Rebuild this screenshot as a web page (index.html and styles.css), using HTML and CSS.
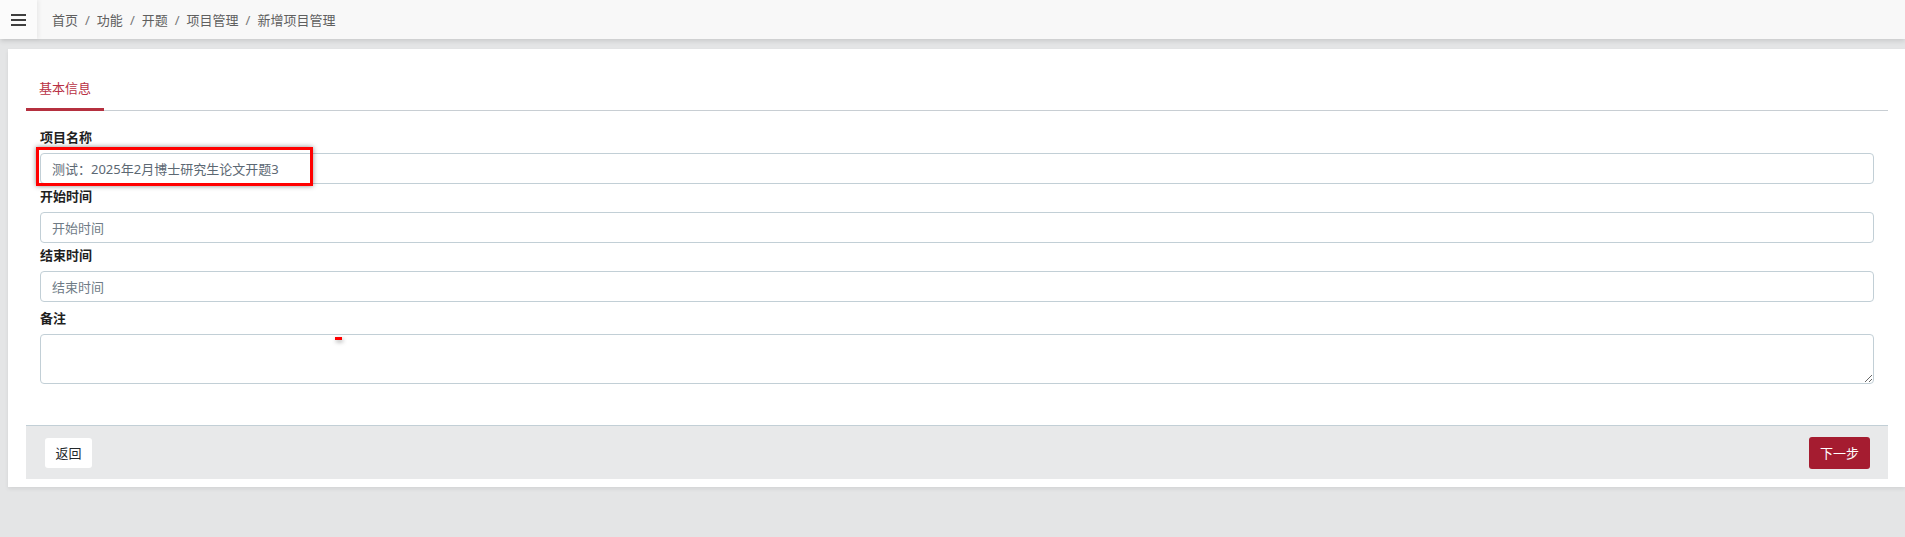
FILE: index.html
```html
<!DOCTYPE html>
<html lang="zh-CN">
<head>
<meta charset="utf-8">
<title>新增项目管理</title>
<link rel="stylesheet" href="styles.css">
</head>
<body>
<header class="topbar">
  <button class="menu-toggle" aria-label="menu">
    <span class="bar"></span><span class="bar"></span><span class="bar"></span>
  </button>
  <ol class="breadcrumb">
    <li>首页</li>
    <li class="sep">/</li>
    <li>功能</li>
    <li class="sep">/</li>
    <li>开题</li>
    <li class="sep">/</li>
    <li>项目管理</li>
    <li class="sep">/</li>
    <li>新增项目管理</li>
  </ol>
</header>
<main class="main">
  <section class="card">
    <nav class="tabs">
      <a class="tab active">基本信息</a>
    </nav>
    <form class="form-body">
      <div class="group">
        <label class="label">项目名称</label>
        <input class="input" type="text" value="测试：2025年2月博士研究生论文开题3">
      </div>
      <div class="group">
        <label class="label">开始时间</label>
        <input class="input" type="text" placeholder="开始时间">
      </div>
      <div class="group">
        <label class="label">结束时间</label>
        <input class="input" type="text" placeholder="结束时间">
      </div>
      <div class="group group-note">
        <label class="label">备注</label>
        <textarea class="textarea"></textarea>
      </div>
    </form>
    <div class="footer">
      <button class="btn btn-light" type="button">返回</button>
      <button class="btn btn-primary" type="button">下一步</button>
    </div>
  </section>
</main>
<div class="highlight"></div>
<div class="mark"></div>
</body>
</html>
```

FILE: styles.css
```css
* { box-sizing: border-box; }
html, body { margin: 0; padding: 0; }
body {
  background: #e4e5e6;
  font-family: "Noto Sans", "Noto Sans CJK SC", sans-serif;
  font-size: 13px;
  color: #23282c;
  height: 537px;
  overflow: hidden;
  position: relative;
}
.topbar {
  height: 39px;
  background: #f8f8f8;
  display: flex;
  align-items: center;
  box-shadow: 0 2px 5px rgba(0,0,0,0.12);
  position: relative;
  z-index: 2;
}
.menu-toggle {
  width: 37px;
  height: 39px;
  border: 0;
  padding: 0;
  background: #fbfbfb;
  box-shadow: 2px 0 4px rgba(0,0,0,0.06);
  display: flex;
  flex-direction: column;
  justify-content: center;
  align-items: center;
  gap: 3px;
}
.menu-toggle .bar {
  display: block;
  width: 15px;
  height: 2px;
  background: #3f3f3f;
}
.breadcrumb {
  list-style: none;
  margin: 0 0 0 15px;
  padding: 0;
  display: flex;
  align-items: center;
  color: #5f5f5f;
  font-size: 13px;
  line-height: 18px;
}
.breadcrumb .sep { margin: 0 7px; color: #777; }
.main {
  padding: 10px 0 0 8px;
}
.card {
  background: #fff;
  padding: 19px 17px 8px 18px;
  box-shadow: 0 2px 4px rgba(0,0,0,0.08);
}
.tabs {
  display: flex;
  border-bottom: 1px solid #c8ced3;
  height: 43px;
}
.tab {
  display: block;
  padding: 10px 13px;
  line-height: 20px;
  height: 43px;
  color: #b83144;
  border-bottom: 3px solid #b5303f;
  margin-bottom: -1px;
}
.form-body {
  padding: 17px 14px 0;
  margin: 0;
}
.group { display: flex; flex-direction: column; }
.label {
  display: block;
  font-weight: bold;
  line-height: 18px;
  margin: 3px 0 7px;
  color: #1f1f1f;
}
.group:first-child .label { margin-top: 0; }
.group-note .label { margin-top: 7px; }
.input {
  display: block;
  width: 100%;
  height: 31px;
  border: 1px solid #c2cfd6;
  border-radius: 4px;
  padding: 0 11px;
  font-family: inherit;
  font-size: 13px;
  color: #5c6873;
  background: #fff;
  outline: none;
}
.input::placeholder { color: #6f7b86; opacity: 1; }
.textarea {
  display: block;
  width: 100%;
  height: 50px;
  border: 1px solid #c2cfd6;
  border-radius: 4px;
  padding: 6px 11px;
  font-family: inherit;
  font-size: 13px;
  resize: vertical;
  outline: none;
}
.footer {
  margin-top: 41px;
  border-top: 1px solid #c2cfd6;
  background: #e8e9ea;
  height: 54px;
  padding: 0 18px 0 19px;
  display: flex;
  justify-content: space-between;
  align-items: center;
}
.btn {
  border: 0;
  border-radius: 3px;
  font-family: inherit;
  font-size: 13px;
  line-height: 18px;
  padding: 0;
}
.btn-light {
  width: 47px;
  height: 30px;
  background: #fff;
  color: #23282c;
}
.btn-primary {
  width: 61px;
  height: 32px;
  background: #a51c30;
  color: #fff;
}
.highlight {
  position: absolute;
  left: 36px;
  top: 147px;
  width: 277px;
  height: 39px;
  border: 3px solid #f00;
  box-shadow: 0 0 5px rgba(0,0,0,0.45);
}
.mark {
  position: absolute;
  left: 335px;
  top: 337px;
  width: 7px;
  height: 3px;
  background: #f00;
  box-shadow: 1px 2px 4px rgba(0,0,0,0.35);
}
```
